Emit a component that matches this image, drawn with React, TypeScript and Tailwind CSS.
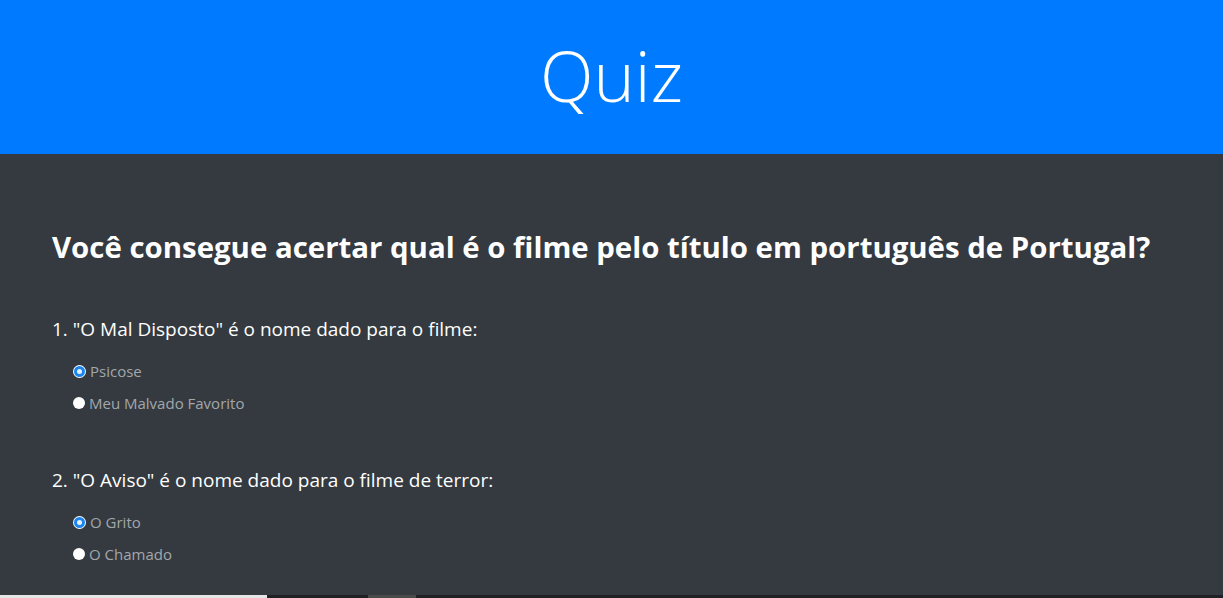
import { useState } from "react";

const questions = [
  {
    title: '1. "O Mal Disposto" é o nome dado para o filme:',
    options: ["Psicose", "Meu Malvado Favorito"],
  },
  {
    title: '2. "O Aviso" é o nome dado para o filme de terror:',
    options: ["O Grito", "O Chamado"],
  },
];

function Radio({ checked }: { checked: boolean }) {
  return checked ? (
    <span className="w-[13px] h-[13px] rounded-full bg-white flex items-center justify-center">
      <span className="w-[11px] h-[11px] rounded-full border-[3px] border-[#1a84f0] bg-[#e8f2ff]" />
    </span>
  ) : (
    <span className="w-[12px] h-[12px] rounded-full bg-white" />
  );
}

function App() {
  const [answers, setAnswers] = useState<number[]>([0, 0]);

  return (
    <div className="min-h-screen flex flex-col bg-[#343a40] font-['Open_Sans',sans-serif]">
      <header className="h-[154px] bg-[#007bff] flex items-center justify-center">
        <h1 className="text-[70px] font-light text-white leading-none mt-[-4px]">Quiz</h1>
      </header>
      <main className="flex-1 px-[52px] pt-[73px]">
        <h2 className="text-[29.4px] font-bold text-white leading-[40px]">
          Você consegue acertar qual é o filme pelo título em português de Portugal?
        </h2>
        {questions.map((q, qi) => (
          <div key={qi} className={qi === 0 ? "mt-[48px]" : "mt-[52px]"}>
            <p className="text-[19px] text-white leading-[28px]">{q.title}</p>
            <div className="mt-[17px] pl-[21px] flex flex-col gap-[10px]">
              {q.options.map((opt, oi) => (
                <label
                  key={oi}
                  className="flex items-center gap-[4px] cursor-pointer h-[22px]"
                  onClick={() => setAnswers(answers.map((a, i) => (i === qi ? oi : a)))}
                >
                  <Radio checked={answers[qi] === oi} />
                  <span className="text-[15px] text-[#a3a7ab]">{opt}</span>
                </label>
              ))}
            </div>
          </div>
        ))}
      </main>
      <div className="h-[3px] flex">
        <div className="w-[267px] bg-[#e6e6e6]" />
        <div className="w-[101px] bg-[#202124]" />
        <div className="w-[48px] bg-[#4a4a4a]" />
        <div className="flex-1 bg-[#202124]" />
      </div>
    </div>
  );
}

export default App;
